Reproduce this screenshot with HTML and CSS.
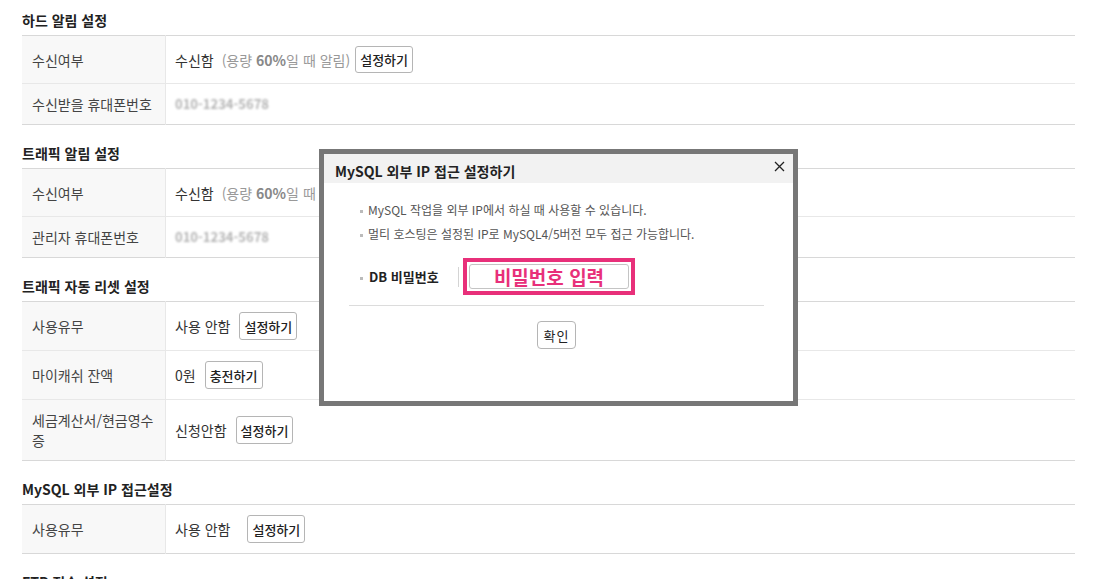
FILE: index.html
```html
<!DOCTYPE html>
<html lang="ko">
<head>
  <meta charset="UTF-8" />
  <title>호스팅 설정</title>
  <link rel="stylesheet" href="styles.css">
</head>
<body>
  <div class="page">
    <div class="section">
      <h3 class="section-title">하드 알림 설정</h3>
      <table class="setting-table">
        <tr>
          <th>수신여부</th>
          <td><div class="cell">수신함<span class="note">(용량 <b>60%</b>일 때 알림)</span><button class="btn btn-tight">설정하기</button></div></td>
        </tr>
        <tr>
          <th>수신받을 휴대폰번호</th>
          <td><div class="cell"><span class="blurred">010-1234-5678</span></div></td>
        </tr>
      </table>
    </div>

    <div class="section">
      <h3 class="section-title">트래픽 알림 설정</h3>
      <table class="setting-table">
        <tr>
          <th>수신여부</th>
          <td><div class="cell">수신함<span class="note">(용량 <b>60%</b>일 때 알림)</span><button class="btn btn-tight">설정하기</button></div></td>
        </tr>
        <tr>
          <th>관리자 휴대폰번호</th>
          <td><div class="cell"><span class="blurred">010-1234-5678</span></div></td>
        </tr>
      </table>
    </div>

    <div class="section">
      <h3 class="section-title">트래픽 자동 리셋 설정</h3>
      <table class="setting-table">
        <tr>
          <th>사용유무</th>
          <td><div class="cell">사용 안함<button class="btn">설정하기</button></div></td>
        </tr>
        <tr>
          <th>마이캐쉬 잔액</th>
          <td><div class="cell">0원<button class="btn">충전하기</button></div></td>
        </tr>
        <tr>
          <th>세금계산서/현금영수증</th>
          <td><div class="cell">신청안함<button class="btn">설정하기</button></div></td>
        </tr>
      </table>
    </div>

    <div class="section">
      <h3 class="section-title">MySQL 외부 IP 접근설정</h3>
      <table class="setting-table">
        <tr>
          <th>사용유무</th>
          <td><div class="cell">사용 안함<button class="btn btn-wide">설정하기</button></div></td>
        </tr>
      </table>
    </div>

    <div class="section">
      <h3 class="section-title">FTP 접속 설정</h3>
    </div>
  </div>

  <div class="modal">
    <div class="modal-head">
      <span class="modal-title">MySQL 외부 IP 접근 설정하기</span>
      <button class="modal-close" aria-label="닫기">
        <svg width="11" height="11" viewBox="0 0 11 11"><path d="M1 1L10 10M10 1L1 10" stroke="#222" stroke-width="1.3" fill="none"/></svg>
      </button>
    </div>
    <div class="modal-body">
      <ul class="notice">
        <li>MySQL 작업을 외부 IP에서 하실 때 사용할 수 있습니다.</li>
        <li>멀티 호스팅은 설정된 IP로 MySQL4/5버전 모두 접근 가능합니다.</li>
      </ul>
      <div class="field">
        <span class="field-label">DB 비밀번호</span>
        <span class="field-bar"></span>
        <div class="highlight">
          <div class="pw-input">비밀번호 입력</div>
        </div>
      </div>
      <div class="modal-foot">
        <button class="btn btn-ok">확인</button>
      </div>
    </div>
  </div>
</body>
</html>
```

FILE: styles.css
```css
body {
  margin: 0;
  background: #fff;
  color: #333;
  font-family: "Noto Sans CJK KR", "Noto Sans", sans-serif;
  font-size: 14px;
  overflow: hidden;
}
.page {
  padding: 10px 24px 0 22px;
}
.section {
  margin-bottom: 18px;
}
.section-title {
  margin: 0 0 5px;
  font-size: 14px;
  line-height: 20px;
  font-weight: bold;
  color: #222;
}
.setting-table {
  width: 100%;
  border-collapse: collapse;
  border-top: 1px solid #d8d8d8;
  border-bottom: 1px solid #d8d8d8;
}
.setting-table tr + tr {
  border-top: 1px solid #e8e8e8;
}
.setting-table th {
  width: 129px;
  padding: 10px 4px 10px 10px;
  background: #f8f8f8;
  border-right: 1px solid #e8e8e8;
  text-align: left;
  font-weight: normal;
  color: #444;
  line-height: 20px;
}
.setting-table td {
  padding: 10px 9px;
  line-height: 20px;
  color: #333;
}
.cell {
  display: flex;
  align-items: center;
  min-height: 20px;
}
.note {
  color: #999;
  margin-left: 8px;
}
.note b {
  color: #888;
}
.blurred {
  color: #b4b4b4;
  filter: blur(1.3px);
  font-size: 13px;
  font-weight: bold;
}
.btn {
  height: 28px;
  padding: 0 4px;
  margin-left: 9px;
  background: #fff;
  border: 1px solid #b5b5b5;
  border-radius: 3px;
  font-family: inherit;
  font-size: 13px;
  font-weight: 500;
  color: #222;
  cursor: pointer;
}
.btn-tight {
  margin-left: 5px;
  height: 27px;
}
.btn-wide {
  margin-left: 17px;
}

/* modal */
.modal {
  position: absolute;
  left: 319px;
  top: 149px;
  width: 469px;
  height: 247px;
  border: 5px solid #777;
  background: #fff;
}
.modal-head {
  display: flex;
  align-items: center;
  justify-content: space-between;
  height: 29px;
  padding: 0 8px 0 11px;
  background: #f2f2f2;
}
.modal-title {
  font-size: 14px;
  font-weight: bold;
  color: #222;
  margin-top: 4px;
}
.modal-close {
  display: flex;
  padding: 0;
  border: 0;
  background: none;
  margin-top: -4px;
}
.modal-body {
  padding: 15px 29px 0 25px;
}
.notice {
  list-style: none;
  margin: 0;
  padding: 0 0 0 11px;
  font-size: 12px;
  line-height: 24px;
  color: #555;
}
.notice li::before,
.field-label::before {
  content: "";
  display: inline-block;
  width: 3px;
  height: 3px;
  background: #bbb;
  margin-right: 5px;
  vertical-align: middle;
}
.field {
  display: flex;
  align-items: center;
  margin-top: 12px;
  padding-left: 11px;
}
.field-label {
  width: 98px;
  font-size: 13px;
  font-weight: bold;
  color: #222;
}
.field-label::before {
  margin-right: 6px;
}
.field-bar {
  width: 1px;
  height: 20px;
  background: #d4d4d4;
}
.highlight {
  margin-left: 4px;
  padding: 2px;
  border: 4px solid #e8307a;
}
.pw-input {
  width: 158px;
  height: 23px;
  border: 1px solid #c4c4c4;
  border-radius: 3px;
  text-align: center;
  font-size: 19px;
  font-weight: bold;
  line-height: 23px;
  color: #e8307a;
}
.modal-foot {
  margin-top: 10px;
  padding-top: 15px;
  border-top: 1px solid #dcdcdc;
  text-align: center;
}
.btn-ok {
  margin: 0;
  padding: 0 6px;
  height: 28px;
  font-size: 13px;
  font-weight: normal;
  letter-spacing: 1px;
  border-radius: 4px;
}
```
